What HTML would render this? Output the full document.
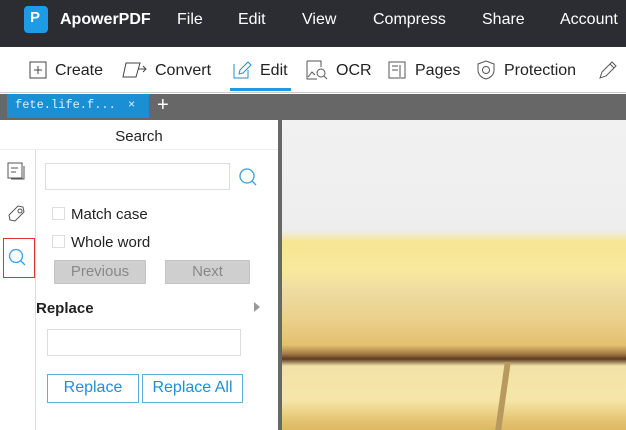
<!DOCTYPE html>
<html><head><meta charset="utf-8"><style>
*{margin:0;padding:0;box-sizing:border-box}
body{width:626px;height:430px;overflow:hidden;position:relative;font-family:"Liberation Sans","Noto Sans CJK SC",sans-serif;background:#fff}
.a{position:absolute}
.hdr{left:0;top:0;width:626px;height:47px;background:#2b2d33;color:#fff}
.hdr span{position:absolute;top:11px;font-size:16px}
.tb{top:47px;left:0;width:626px;height:46px;background:#fff;border-bottom:1px solid #ccc}
.tb span{position:absolute;top:15px;font-size:16px;color:#222}
.tabs{top:94px;left:0;width:626px;height:26px;background:#676767}
.side{top:120px;left:0;width:278px;height:310px;background:#fff}
.btn{position:absolute;background:#cfcfcf;color:#888;font-size:15px;text-align:center;line-height:22px;height:24px;border:1px solid #c4c4c4}
.bb{position:absolute;border:1px solid #5aaee0;color:#1f8fd8;font-size:16px;text-align:center;line-height:26px;height:29px}
.cb{position:absolute;width:13px;height:13px;border:1px solid #ddd}
.lbl{position:absolute;font-size:15px;color:#222}
</style></head><body>
<div class="a hdr">
 <div class="a" style="left:24px;top:6px;width:24px;height:27px;background:#1e9be6;border-radius:4px"></div>
 <div class="a" style="left:30px;top:9px;color:#fff;font-weight:bold;font-size:15px">P</div>
 <span style="left:60px;font-weight:bold">ApowerPDF</span>
 <span style="left:177px">File</span>
 <span style="left:238px">Edit</span>
 <span style="left:302px">View</span>
 <span style="left:373px">Compress</span>
 <span style="left:482px">Share</span>
 <span style="left:560px">Account</span>
</div>
<div class="a tb">
 <svg class="a" style="left:29px;top:14px" width="18" height="18"><rect x="1" y="1" width="16" height="16" fill="none" stroke="#444"/><path d="M5 9h8M9 5v8" stroke="#444"/></svg>
 <span style="left:55px">Create</span>
 <svg class="a" style="left:122px;top:14px" width="26" height="18"><path d="M4 2h14l-4 14H1z" fill="none" stroke="#444"/><path d="M16 8h8M21 5l3 3-3 3" fill="none" stroke="#444"/></svg>
 <span style="left:155px">Convert</span>
 <svg class="a" style="left:232px;top:13px" width="20" height="20"><path d="M2 4v14h14v-8" fill="none" stroke="#1f8fd8"/><path d="M7 14l1-4 8-8 3 3-8 8z" fill="none" stroke="#1f8fd8"/></svg>
 <span style="left:260px">Edit</span>
 <div class="a" style="left:230px;top:41px;width:61px;height:3px;background:#1e9be6"></div>
 <svg class="a" style="left:306px;top:13px" width="22" height="20"><path d="M1 1h14v6M1 1v18h10" fill="none" stroke="#555"/><path d="M2 17l4-5 3 3" fill="none" stroke="#555"/><circle cx="15" cy="13" r="4" fill="none" stroke="#555"/><path d="M18 16l3 3" stroke="#555"/></svg>
 <span style="left:336px">OCR</span>
 <svg class="a" style="left:388px;top:14px" width="18" height="18"><rect x="1" y="1" width="16" height="16" fill="none" stroke="#555"/><path d="M4 5h6M4 9h6M12 4v12" stroke="#555"/></svg>
 <span style="left:415px">Pages</span>
 <svg class="a" style="left:477px;top:13px" width="18" height="20"><path d="M9 1l8 3v6c0 5-4 8-8 9-4-1-8-4-8-9V4z" fill="none" stroke="#555"/><circle cx="9" cy="10" r="3.5" fill="none" stroke="#555"/></svg>
 <span style="left:504px">Protection</span>
 <svg class="a" style="left:598px;top:13px" width="20" height="20"><path d="M2 18l2-6 10-10 4 4-10 10z M12 4l4 4" fill="none" stroke="#555"/></svg>
</div>
<div class="a tabs">
 <div class="a" style="left:7px;top:0;width:142px;height:24px;background:#1b8fd3;color:#dfefff;font-family:'Liberation Mono',monospace;font-size:12px">
  <span class="a" style="left:8px;top:4px">fete.life.f...</span>
  <span class="a" style="left:121px;top:4px">×</span>
 </div>
 <span class="a" style="left:157px;top:0;color:#fff;font-size:20px">+</span>
</div>
<div class="a" style="left:278px;top:120px;width:4px;height:310px;background:#676767"></div>
<div class="a side">
 <div class="a" style="left:0;top:0;width:278px;height:30px;border-bottom:1px solid #eee;text-align:center;font-size:15px;line-height:34px;color:#222">Search</div>
 <div class="a" style="left:35px;top:30px;width:1px;height:280px;background:#ddd"></div>
 <svg class="a" style="left:7px;top:42px" width="20" height="20"><rect x="1" y="1" width="14" height="15" fill="#fff" stroke="#555"/><path d="M4 17h13V4" fill="none" stroke="#555"/><path d="M4 6h7M4 10h5" stroke="#555"/></svg>
 <svg class="a" style="left:7px;top:84px" width="20" height="20"><path d="M3 16l-1-5 9-9 5 1 1 5-9 9z" fill="none" stroke="#555"/><circle cx="13" cy="7" r="2" fill="none" stroke="#555"/></svg>
 <div class="a" style="left:3px;top:118px;width:32px;height:40px;border:1px solid #d9343a"></div>
 <svg class="a" style="left:8px;top:128px" width="20" height="20"><circle cx="8" cy="8" r="6.5" fill="none" stroke="#3a9de0" stroke-width="1.3"/><path d="M13 13l4 4" stroke="#3a9de0" stroke-width="1.3"/></svg>
 <div class="a" style="left:45px;top:43px;width:185px;height:27px;border:1px solid #ddd"></div>
 <svg class="a" style="left:238px;top:47px" width="20" height="20"><circle cx="9" cy="9" r="7" fill="none" stroke="#3a9de0" stroke-width="1.3"/><path d="M14 14l4 4" stroke="#3a9de0" stroke-width="1.3"/></svg>
 <div class="cb" style="left:52px;top:87px"></div><span class="lbl" style="left:71px;top:86px">Match case</span>
 <div class="cb" style="left:52px;top:115px"></div><span class="lbl" style="left:71px;top:114px">Whole word</span>
 <div class="btn" style="left:54px;top:140px;width:92px">Previous</div>
 <div class="btn" style="left:165px;top:140px;width:85px">Next</div>
 <span class="lbl" style="left:36px;top:180px;font-weight:bold">Replace</span>
 <div class="a" style="left:254px;top:182px;width:0;height:0;border-left:6px solid #999;border-top:5px solid transparent;border-bottom:5px solid transparent"></div>
 <div class="a" style="left:47px;top:209px;width:194px;height:27px;border:1px solid #ddd"></div>
 <div class="bb" style="left:47px;top:254px;width:92px">Replace</div>
 <div class="bb" style="left:142px;top:254px;width:101px">Replace All</div>
</div>
<div class="a" style="left:282px;top:120px;width:344px;height:310px;background:linear-gradient(#f1f1f1 0,#eeeeee 110px,#f6e592 122px,#f8e99e 150px,#efdba0 172px,#ead08a 200px,#e4c070 225px,#a27a45 234px,#5a3a20 239px,#f2e2a8 246px,#f5e6a8 280px,#e6c878 298px,#dcb860 310px)"></div>
<div class="a" style="left:500px;top:362px;width:6px;height:68px;background:#b89a60;transform:skewX(-8deg)"></div>
</body></html>
